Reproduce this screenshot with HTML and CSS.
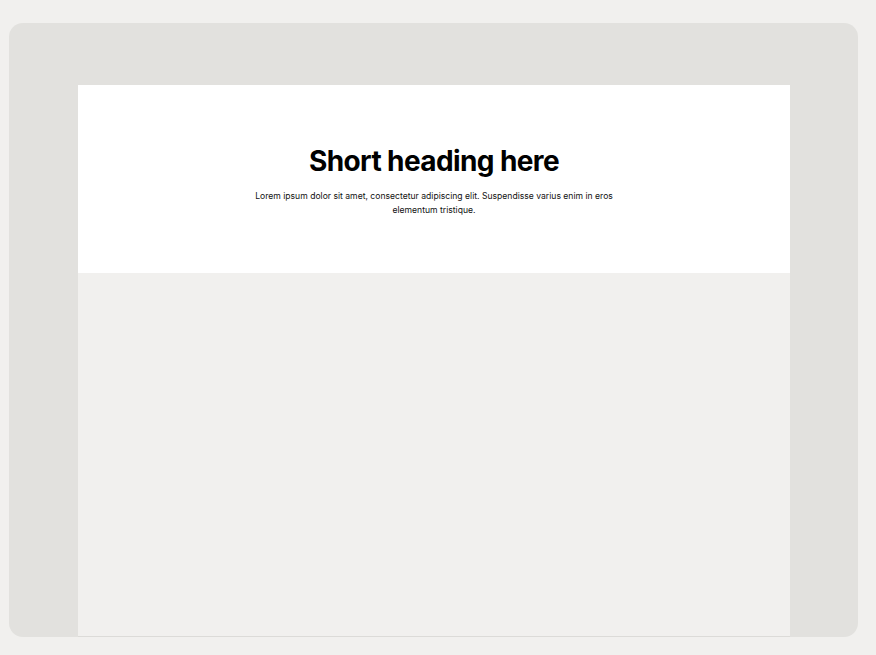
FILE: index.html
```html
<!DOCTYPE html>
<html lang="en">
<head>
<meta charset="utf-8">
<title>Short heading here</title>
<link rel="stylesheet" href="styles.css">
</head>
<body>
<div class="frame">
  <div class="page">
    <section class="hero">
      <h1 class="hero-title">Short heading here</h1>
      <p class="hero-text">Lorem ipsum dolor sit amet, consectetur adipiscing elit. Suspendisse varius enim in eros elementum tristique.</p>
    </section>
    <section class="body-area"></section>
  </div>
</div>
</body>
</html>
```
FILE: styles.css
```css
html, body {
  margin: 0;
  padding: 0;
}
body {
  background: #f1f0ee;
  font-family: Inter, "Noto Sans", sans-serif;
  width: 876px;
  height: 655px;
  overflow: hidden;
}
.frame {
  box-sizing: border-box;
  margin: 23px 0 0 9px;
  width: 849px;
  height: 614px;
  background: #e2e1de;
  border-radius: 14px;
  padding: 62px 68px 0 69px;
  display: flex;
  flex-direction: column;
}
.page {
  flex: 1;
  display: flex;
  flex-direction: column;
}
.hero {
  background: #ffffff;
  height: 188px;
  box-sizing: border-box;
  padding-top: 58px;
  display: flex;
  flex-direction: column;
  align-items: center;
}
.hero-title {
  margin: 0;
  font-size: 28px;
  font-weight: 700;
  line-height: 36px;
  letter-spacing: -0.6px;
  color: #000;
}
.hero-text {
  margin: 10px 0 0;
  max-width: 364px;
  text-align: center;
  font-size: 8.6px;
  line-height: 14px;
  color: #111;
}
.body-area {
  flex: 1;
  background: #f1f0ee;
  border-bottom: 1px solid #dcdbd8;
}
```
